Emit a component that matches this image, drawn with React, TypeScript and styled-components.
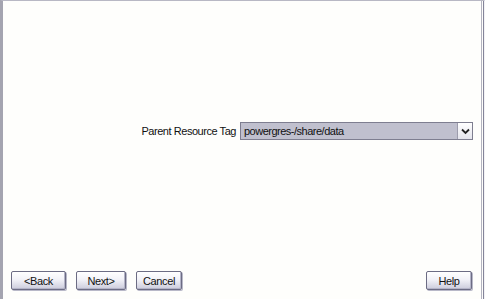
import React from "react";
import styled, { createGlobalStyle } from "styled-components";

const Global = createGlobalStyle`
  html, body { margin: 0; padding: 0; background: #fdfdfb; }
  body { font-family: "Liberation Sans", Arial, sans-serif; }
`;

const Frame = styled.div`
  box-sizing: border-box;
  width: 485px;
  height: 299px;
  background: #fefefc;
  border-left: 3px solid #a4a4b0;
  border-top: 1px solid #b8b8c4;
  border-right: 1px solid #f2f2f4;
  box-shadow: inset -1px 0 0 #84849a, inset -2px 0 0 #fefefc, inset -3px 0 0 #b4b4c0;
  display: flex;
  flex-direction: column;
`;

const Body = styled.div`
  flex: 1;
  display: flex;
  flex-direction: column;
  padding-top: 121px;
`;

const FieldRow = styled.div`
  display: flex;
  align-items: center;
  justify-content: flex-end;
  gap: 4px;
  padding-right: 11px;
`;

const Label = styled.span`
  font-size: 11px;
  letter-spacing: -0.45px;
  color: #111;
`;

const Combo = styled.div`
  box-sizing: border-box;
  width: 233px;
  height: 18px;
  display: flex;
  border: 1px solid #7e7e90;
  background: #c0c0ce;
`;

const ComboText = styled.span`
  flex: 1;
  font-size: 11px;
  letter-spacing: -0.5px;
  line-height: 16px;
  padding-left: 3px;
  color: #111;
`;

const ComboArrow = styled.div`
  width: 15px;
  height: 16px;
  box-sizing: border-box;
  background: linear-gradient(#ffffff, #e4e4ec);
  border-left: 1px solid #9c9cac;
  display: flex;
  align-items: center;
  justify-content: center;
`;

const ButtonBar = styled.div`
  display: flex;
  align-items: center;
  gap: 10px;
  padding: 0 12px 9px 8px;
`;

const Spacer = styled.div`
  flex: 1;
`;

const Btn = styled.button<{ $w: number }>`
  box-sizing: border-box;
  width: ${(p) => p.$w}px;
  height: 19px;
  padding: 0;
  font-family: "Liberation Sans", Arial, sans-serif;
  font-size: 11px;
  letter-spacing: -0.4px;
  color: #111;
  background: linear-gradient(#ffffff 0%, #f2f2f8 45%, #ccccdc 100%);
  border: 1px solid #6c6c84;
  border-radius: 2px;
  box-shadow: 1px 1px 0 #b8b8c8, inset -1px -1px 0 #b4b4c8;
`;

export default function App() {
  return (
    <>
      <Global />
      <Frame>
        <Body>
          <FieldRow>
            <Label>Parent Resource Tag</Label>
            <Combo>
              <ComboText>powergres-/share/data</ComboText>
              <ComboArrow>
                <svg width="9" height="7" viewBox="0 0 9 7">
                  <path d="M1 1.5 L4.5 5 L8 1.5" fill="none" stroke="#222" strokeWidth="1.8" />
                </svg>
              </ComboArrow>
            </Combo>
          </FieldRow>
        </Body>
        <ButtonBar>
          <Btn $w={55}>&lt;Back</Btn>
          <Btn $w={50}>Next&gt;</Btn>
          <Btn $w={46}>Cancel</Btn>
          <Spacer />
          <Btn $w={46}>Help</Btn>
        </ButtonBar>
      </Frame>
    </>
  );
}
